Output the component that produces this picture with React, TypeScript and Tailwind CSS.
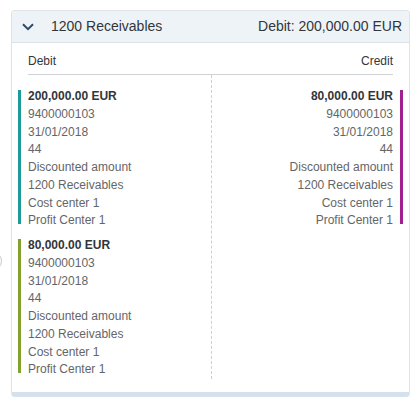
import React from "react";

type Entry = { amount: string; color: string };

const lines = ["9400000103", "31/01/2018", "44", "Discounted amount", "1200 Receivables", "Cost center 1", "Profit Center 1"];

function EntryBlock({ e, side }: { e: Entry; side: "left" | "right" }) {
  const isLeft = side === "left";
  return (
    <div className={`flex gap-[7px] ${isLeft ? "ml-[-10px] flex-row" : "mr-[-10px] flex-row-reverse"}`}>
      <div className="w-[3px] mt-[2px] mb-[6px] shrink-0" style={{ backgroundColor: e.color }} />
      <div className={`flex-1 text-[12px] leading-[17.75px] text-[#636669] ${isLeft ? "text-left" : "text-right"}`}>
        <div className="font-bold text-[#32363a]">{e.amount}</div>
        {lines.map((l) => (
          <div key={l}>{l}</div>
        ))}
      </div>
    </div>
  );
}

export default function App() {
  return (
    <div className="relative w-[420px] h-[403px] bg-white overflow-hidden" style={{ fontFamily: '"Liberation Sans", Arial, sans-serif' }}>
      <div className="absolute left-[-18px] top-[251px] w-[20px] h-[20px] rounded-full border border-[#c8c8c8]" />
      <div className="pt-[10px] pl-[11px]">
        <div className="w-[399px] rounded-[4px] border-x border-t border-[#dde3e8] border-b-[5px] border-b-[#d5e2ee] overflow-hidden">
          <div className="h-[32px] bg-[#eef3f8] border-b border-[#dbe1e7] flex items-center pl-[10px] pr-[7px]">
            <svg width="12" height="8" viewBox="0 0 12 8" className="mt-[1px]">
              <path d="M1 1.2 L6 6.2 L11 1.2" fill="none" stroke="#2c4a6b" strokeWidth="2" />
            </svg>
            <div className="ml-[17px] text-[14px] text-[#32363a]">1200 Receivables</div>
            <div className="ml-auto text-[14px] text-[#32363a]">Debit: 200,000.00 EUR</div>
          </div>
          <div className="px-[16px] pb-[13px]">
            <div className="h-[32px] flex items-center justify-between border-b border-[#cfd3d6] text-[12px] text-[#32363a] pt-[4px]">
              <span>Debit</span>
              <span>Credit</span>
            </div>
            <div className="grid grid-cols-[184px_1fr]">
              <div className="border-r border-dashed border-[#cfcfcf] pt-[13px] pr-[10px] flex flex-col gap-[7px]">
                <EntryBlock e={{ amount: "200,000.00 EUR", color: "#1e9a9a" }} side="left" />
                <EntryBlock e={{ amount: "80,000.00 EUR", color: "#84a02d" }} side="left" />
              </div>
              <div className="pt-[13px] pl-[10px]">
                <EntryBlock e={{ amount: "80,000.00 EUR", color: "#a1208f" }} side="right" />
              </div>
            </div>
          </div>
        </div>
      </div>
    </div>
  );
}
